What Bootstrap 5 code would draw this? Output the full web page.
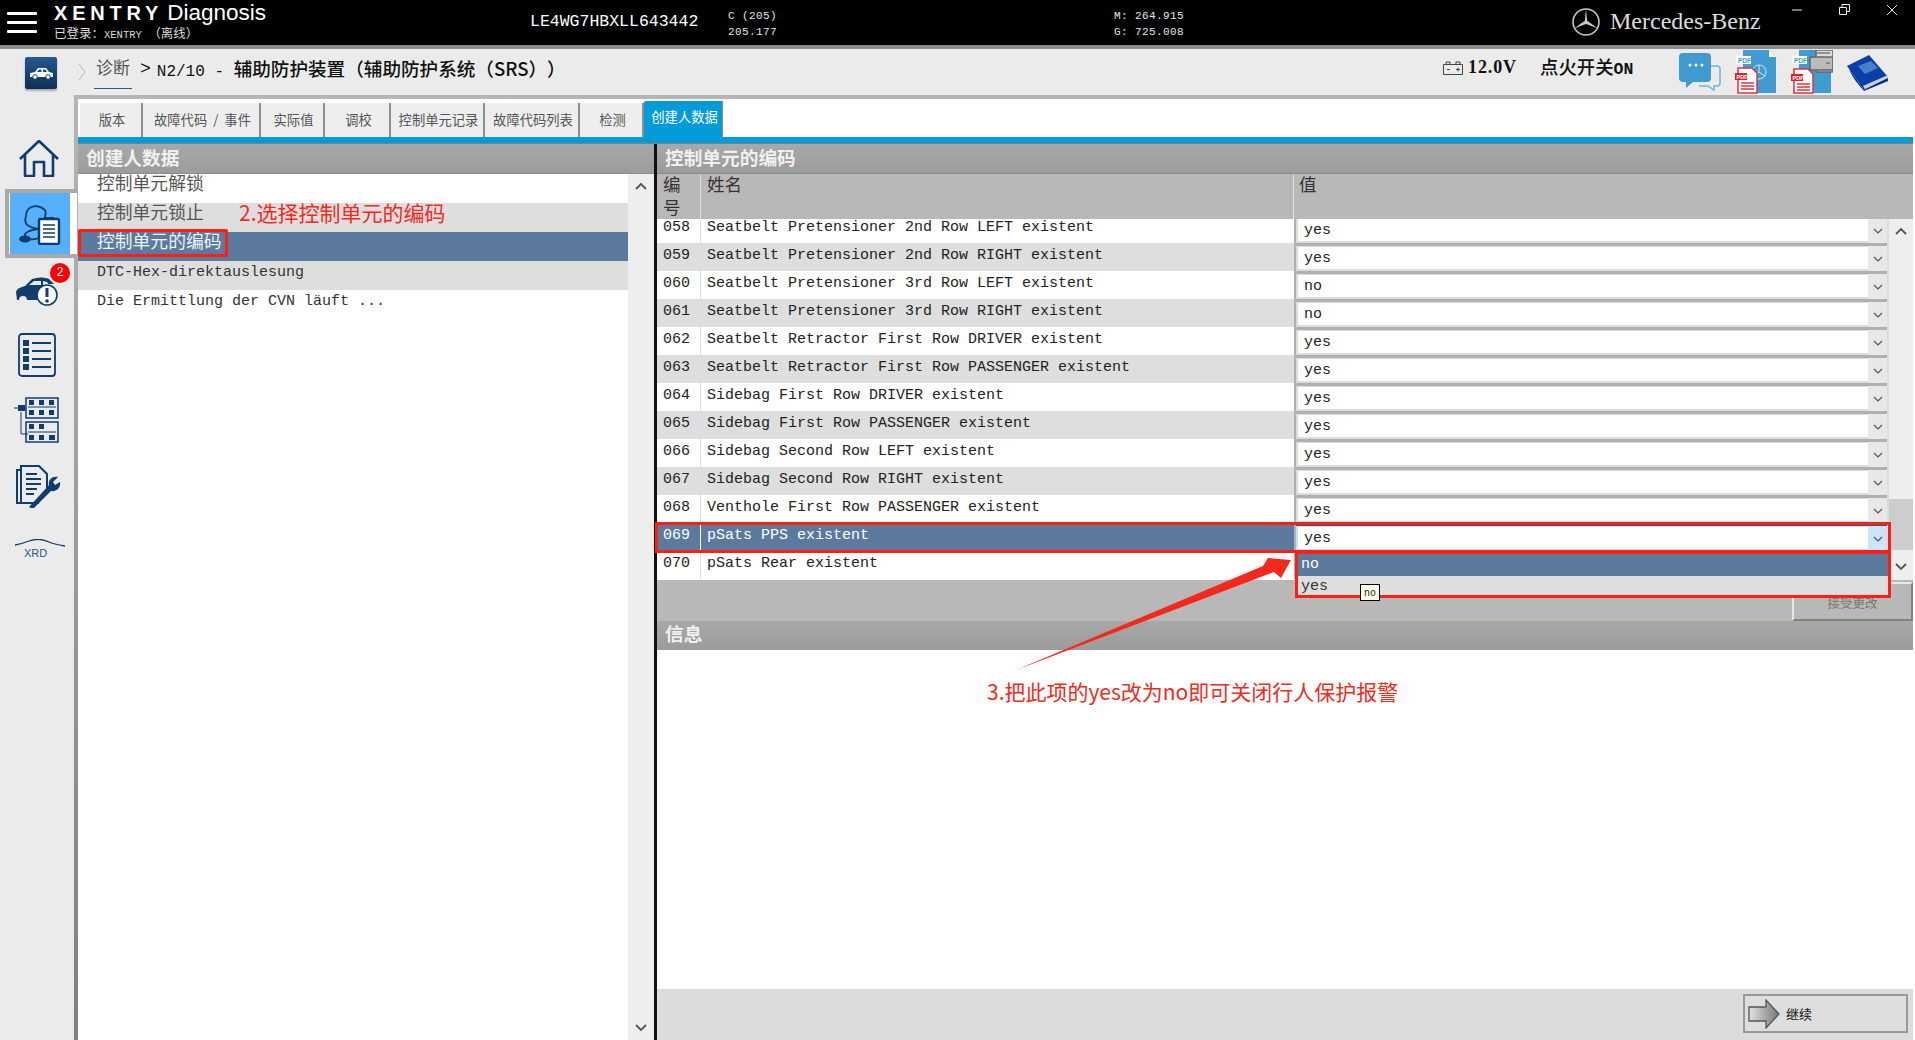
<!DOCTYPE html>
<html lang="zh">
<head>
    <meta charset="UTF-8">
    <title>XENTRY Diagnosis</title>
    <link href="https://cdn.jsdelivr.net/npm/bootstrap@5.3.0/dist/css/bootstrap.min.css" rel="stylesheet">
    <style>
        html, body { height: 100%; overflow: hidden; }
        body { position: relative; width: 1915px; height: 1040px; font-family: "Liberation Mono", "Noto Sans CJK SC", monospace; font-size: 15px; line-height: 1.2; color: #222; background: #ebebeb; text-spacing-trim: space-all; }
        .zh { font-family: "Noto Sans CJK SC", sans-serif; font-size: 1.2em; }

        /* top bar */
        .top-bar { height: 49px; background: #000; border-bottom: 4px solid #8a8a8a; color: #fff; flex: none; }
        .burger { width: 30px; margin: 12px 0 0 7px; flex: none; }
        .burger i { display: block; height: 3px; background: #fff; margin-bottom: 6px; border-radius: 1px; }
        .brand-box { margin-left: 17px; width: 476px; flex: none; }
        .brand-line { height: 26px; line-height: 24px; }
        .brand-x { font: bold 20px "Liberation Sans", sans-serif; letter-spacing: 4.8px; }
        .brand-d { font: 22.5px "Liberation Sans", sans-serif; margin-left: 4px; }
        .brand-sub { font-size: 10.5px; color: #ddd; line-height: 14px; margin-top: 0; }
        .brand-sub .zh { font-size: 12.5px; }
        .vin { font-size: 16.5px; width: 198px; margin-top: 12px; flex: none; }
        .mini-data { font-size: 11px; letter-spacing: .4px; line-height: 16px; padding-top: 8px; color: #e6e6e6; flex: none; }
        .merc { font: 24px "Liberation Serif", serif; color: #ddd; margin-top: 8px; margin-left: 10px; width: 151px; flex: none; }
        .win-btns { width: 154px; padding: 4px 0 0 31px; gap: 36px; flex: none; }

        /* sub bar */
        .sub-bar { height: 46px; background: #ebebeb; flex: none; }
        .car-btn { width: 32px; height: 32px; margin: 8px 0 0 25px; border-radius: 2px; background: linear-gradient(#245b92, #0b2f54); box-shadow: 0 2px 2px #aaa; flex: none; }
        .crumb { margin: 8px 0 0 21px; width: 1280px; font-size: 16px; color: #111; flex: none; }
        .crumb .zh { font-size: 18.6px; font-weight: 500; }
        .crumb-link { color: #555; border-bottom: 1px solid #1b5f95; margin: 0 8px 0 0; padding: 0 2px; height: 32px; font-weight: 400 !important; font-size: 17px !important; }
        .crumb-sep { font-size: 18px; margin: 2px 6px 0 0; }
        .volt { font: bold 18px "Liberation Serif", serif; letter-spacing: .9px; width: 72px; margin: 0 0 0 5px; padding-top: 8px; color: #111; flex: none; }
        .ign { width: 158px; padding-top: 4px; font: bold 16.5px "Liberation Mono", monospace; color: #111; flex: none; }
        .ign .zh { font-size: 18.4px; font-weight: 500; }

        /* side */
        .side-col { width: 74px; background: #ebebeb; flex: none; }
        .side-col svg { display: block; }
        .si-home { margin: 45px 0 0 19px; }
        .si-active { width: 72px; height: 69px; margin: 12px -3px 0 5px; border: 4px solid #a9a9a9; border-right: 0; background: #fff; position: relative; z-index: 2; }
        .si-active > div { width: 60px; height: 61px; margin-left: 1px; background: #57b0fb; }
        .si-car { margin: 19px 0 0 16px; position: relative; width: 42px; }
        .side-badge { position: absolute; left: 34px; top: -14px; width: 20px; height: 20px; border-radius: 50%; background: #f00; color: #fff; font-size: 12px; line-height: 20px; text-align: center; }
        .si-list { margin: 27px 0 0 18px; }
        .si-ecu { margin: 20px 0 0 14px; }
        .si-doc { margin: 22px 0 0 16px; }
        .si-xrd { margin: 31px 0 0 15px; }

        /* frame */
        .work-frame { border-top: 4px solid; border-image: linear-gradient(#b5b5b5, #7f7f7f) 1; border-left: 4px solid #a9a9a9; border-right: 0; border-bottom: 0; width: 1841px; background: #fff; }
        .tab-row { height: 38px; padding-left: 2px; background: #fff; flex: none; }
        .tab-item { height: 34px; padding-left: 3px; background: #eee; border-right: 2px solid #8f8f8f; border-top-left-radius: 2px; color: #555; font-family: "Noto Sans CJK SC", sans-serif; font-size: 13.3px; line-height: 34px; text-align: center; white-space: nowrap; word-spacing: 3px; }
        .tab-on { height: 36px; background: #009bd9; color: #fff; line-height: 32px; border-right: 1px solid #8f8f8f; }
        .tab-strip { height: 7px; width: 1835px; background: #009bd9; border-bottom: 1px solid #808080; flex: none; }
        .panel-left { width: 576px; flex: none; }
        .panel-div { width: 3px; background: #111; flex: none; }
        .panel-right { width: 1256px; flex: none; }
        .panel-head { height: 30px; background: linear-gradient(#a8a8a8, #9c9c9c); border-bottom: 1px solid #858b92; color: #f0f0f0; font-family: "Noto Sans CJK SC", sans-serif; font-size: 18.7px; font-weight: 700; line-height: 26px; padding-left: 8px; flex: none; }
        .side-scroll { width: 26px; background: #eee; flex: none; color: #555; }
        .list-line { height: 29px; padding-left: 19px; color: #333; font-size: 15px; line-height: 23px; }
        .list-line .zh { display: block; font-size: 17.8px; line-height: 17px; color: #555; }
        .list-alt { background: #dedede; }
        .list-sel { background: #5b7a9d; }
        .list-sel .zh { color: #eef2f6; }
        .grid-head { height: 45px; background: #b8b8b8; color: #333; font-family: "Noto Sans CJK SC", sans-serif; font-size: 17.5px; line-height: 23px; flex: none; }
        .head-txt { margin-top: -2px; }
        .c-no { width: 44px; padding-left: 6px; border-right: 1px solid #ddd; flex: none; }
        .c-name { width: 593px; padding-left: 6px; flex: none; }
        .c-val { width: 593px; flex: none; background: #b0b0b0; padding: 3px 0 0 2px; }
        .grid-head .c-name { border-right: 1px solid #ddd; }
        .grid-head .c-val { padding: 0 0 0 5px; width: 619px; background: none; }
        .grid-clip { width: 1230px; height: 361px; overflow: hidden; }
        .grid-inner { margin-top: -4px; }
        .data-line { height: 28px; background: #fff; color: #222; line-height: 26px; }
        .data-line.alt { background: #dedede; }
        .data-line.on { background: #5b7a9d; color: #fff; }
        .data-line.on .c-no { border-color: #fff; }
        .fake-select { height: 25px; background: #fff; color: #222; border: solid #dcdcdc; border-width: 1px 2px 2px; line-height: 24px; padding-left: 6px; }
        .fake-select b { font-weight: 400; flex: 1; }
        .fake-select span { width: 19px; background: #e8e8e8; margin: -1px -2px -2px 0; display: flex; align-items: center; justify-content: center; }
        .on .fake-select { border-color: #c5e0f7; box-shadow: 0 -1px 0 #1b5f95; }
        .on .fake-select span { background: #cce4f7; }
        .grid-scroll { width: 26px; height: 361px; background: #eee; flex: none; border-left: 2px solid #ddd; }
        .grid-scroll .thumb { height: 51px; background: #cdcdcd; }
        .grid-foot { height: 41px; background: #b8b8b8; flex: none; padding-top: 2px; }
        .accept-btn { width: 121px; height: 39px; margin-left: auto; background: #b8b8b8; border: 2px solid; border-color: #e8e8e8 #808080 #808080 #e8e8e8; color: #777; font-family: "Noto Sans CJK SC", sans-serif; font-size: 12.5px; text-align: center; line-height: 38px; }
        .info-body { background: #fff; }
        .bottom-bar { height: 51px; background: #dcdcdc; flex: none; padding: 5px 5px 0 0; }
        .next-btn { width: 165px; height: 39px; border: 2px solid #999; background: #dedede; font-family: "Noto Sans CJK SC", sans-serif; font-size: 13px; color: #111; margin-left: auto; gap: 6px; padding-left: 3px; padding-top: 1px; }

        /* dropdown + notes lying over the grid */
        .drop-list { position: absolute; left: 1297px; top: 554px; width: 592px; z-index: 5; font-size: 15px; }
        .drop-list div { height: 21.5px; padding-left: 4px; line-height: 22px; }
        .drop-a { background: #5b7a9d; color: #fff; }
        .drop-b { background: #dedede; color: #333; }
        .tip-no { position: absolute; left: 1360px; top: 584px; width: 20px; height: 17px; z-index: 7; background: #ffffe1; border: 1px solid #000; font-size: 10px; line-height: 17px; text-align: center; color: #222; }
        .mark-box { position: absolute; border: 3px solid #fb1f14; z-index: 6; }
        .mark-a { left: 78px; top: 229px; width: 150px; height: 28px; border-radius: 2px; }
        .mark-b { left: 655px; top: 522px; width: 1236px; height: 31px; }
        .mark-c { left: 1295px; top: 551px; width: 596px; height: 47px; }
        .note-red { position: absolute; z-index: 6; color: #f4291b; font-family: "Noto Sans CJK SC", sans-serif; font-size: 21px; line-height: 28px; white-space: nowrap; }
        .note-2 { left: 239px; top: 198px; }
        .note-3 { left: 987px; top: 677px; }
        .arrow-mark { position: absolute; left: 1010px; top: 555px; z-index: 6; }
    </style>
</head>
<body class="d-flex flex-column">
    <!-- верх -->
    <div class="top-bar d-flex">
        <div class="burger"><i></i><i></i><i></i></div>
        <div class="brand-box">
            <div class="brand-line"><span class="brand-x">XENTRY</span><span class="brand-d">Diagnosis</span></div>
            <div class="brand-sub"><span class="zh">已登录：</span>XENTRY <span class="zh">（离线）</span></div>
        </div>
        <div class="vin">LE4WG7HBXLL643442</div>
        <div class="mini-data" style="width:386px">C (205)<br>205.177</div>
        <div class="mini-data" style="width:458px">M: 264.915<br>G: 725.008</div>
        <svg width="28" height="28" viewBox="0 0 28 28" class="mt-2 flex-shrink-0">
            <circle cx="14" cy="14" r="13" fill="none" stroke="#c8c8c8" stroke-width="1.6"/>
            <path d="M14 1 L15.2 12.8 L26 20.5 L14 16 L2 20.5 L12.8 12.8 Z" fill="#c8c8c8"/>
        </svg>
        <div class="merc">Mercedes-Benz</div>
        <div class="win-btns d-flex">
            <svg width="11" height="11" viewBox="0 0 11 11"><path d="M0 6h10" stroke="#eee"/></svg>
            <svg width="11" height="11" viewBox="0 0 11 11" fill="none" stroke="#eee"><path d="M.5 3.5h7v7h-7zM3 3V.5h7.5v7H8"/></svg>
            <svg width="12" height="12" viewBox="0 0 12 12"><path d="M1 1l10 10M11 1L1 11" stroke="#eee"/></svg>
        </div>
    </div>

    <div class="sub-bar d-flex">
        <div class="car-btn d-flex align-items-center justify-content-center">
            <svg width="25" height="13" viewBox="0 0 25 13">
                <path d="M1 6L6 5L9 1H17L20 5L24 6V10H1Z" fill="#fff"/>
                <path d="M8 5L10 2.500H12.500V5ZM14 5V2.500H16.500L18 5Z" fill="#1b4d80"/>
                <circle cx="6" cy="10" r="2.300" fill="#fff" stroke="#123e6b"/><circle cx="19" cy="10" r="2.300" fill="#fff" stroke="#123e6b"/>
            </svg>
        </div>
        <div class="crumb d-flex">
            <svg width="8" height="18" viewBox="0 0 8 18" class="me-2" style="margin-top:6px"><path d="M1 1l6 8-6 8" fill="none" stroke="#bbb"/></svg>
            <span class="zh crumb-link">诊断</span>
            <span class="crumb-sep">&gt;</span>
            <span>N2/10 - <span class="zh">辅助防护装置（辅助防护系统（SRS））</span></span>
        </div>
        <svg width="20" height="14" viewBox="0 0 20 14" fill="none" stroke="#444" class="flex-shrink-0" style="margin:12px 0 0 85px"><path d="M.5 3.500h19v10H.5zM3 3.500V1h4v2.500M13 3.500V1h4v2.500M4 8.500h3M13 8.500h4M15 6.500v4"/></svg>
        <div class="volt">12.0V</div>
        <div class="ign"><span class="zh">点火开关</span>ON</div>
    </div>

    <!-- иконки справа в строке -->
    <div class="position-absolute d-flex" style="left:1679px;top:50px;z-index:3;gap:14px">
        <svg width="42" height="40" viewBox="0 0 42 40" style="margin-top:3px">
            <path d="M21 13h17a3 3 0 0 1 3 3v14a3 3 0 0 1-3 3h-3v4l-6-4H20" fill="none" stroke="#6fb4dc" stroke-width="1.500"/>
            <path d="M4 0h24a4 4 0 0 1 4 4v21a4 4 0 0 1-4 4H14l-7 6v-6H4a4 4 0 0 1-4-4V4a4 4 0 0 1 4-4z" fill="#3f9bd0"/>
            <circle cx="11" cy="12" r="1.500" fill="#fff"/><circle cx="17" cy="12" r="1.500" fill="#fff"/><circle cx="23" cy="12" r="1.500" fill="#fff"/>
        </svg>
        <svg width="42" height="44" viewBox="0 0 42 44">
            <path d="M8 0h26l7 7v36H8z" fill="#3f9bd0"/><path d="M34 0l7 7h-7z" fill="#fff"/>
            <rect x="1" y="6" width="15" height="8" fill="#fff"/><text x="3" y="13" font-family="Liberation Sans" font-size="6.500" font-weight="700" fill="#3f9bd0">PDF</text>
            <circle cx="24" cy="22" r="7" fill="none" stroke="#d7e8f3"/><path d="M24 15v7l6 4M24 22l-6 4" stroke="#d7e8f3" fill="none"/>
            <path d="M3 18h14l5 5v20H3z" fill="#fff" stroke="#e0323c" stroke-width="1.500"/>
            <rect x="0" y="23" width="12" height="7" fill="#d9232e"/><text x="1.500" y="29" font-family="Liberation Sans" font-size="5.500" font-weight="700" fill="#fff">PDF</text>
            <path d="M6 33h13M6 36h13M6 39h13" stroke="#e0323c" stroke-width="1.400"/>
        </svg>
        <svg width="42" height="44" viewBox="0 0 42 44">
            <path d="M8 0h32v43H8z" fill="#3f9bd0"/>
            <rect x="1" y="6" width="15" height="8" fill="#fff"/><text x="3" y="13" font-family="Liberation Sans" font-size="6.500" font-weight="700" fill="#3f9bd0">PDF</text>
            <path d="M3 19h14l5 5v19H3z" fill="#fff" stroke="#e0323c" stroke-width="1.500"/>
            <rect x="0" y="24" width="12" height="7" fill="#d9232e"/><text x="1.500" y="30" font-family="Liberation Sans" font-size="5.500" font-weight="700" fill="#fff">PDF</text>
            <path d="M6 34h13M6 37h13M6 40h13" stroke="#e0323c" stroke-width="1.400"/>
            <rect x="25" y="0" width="17" height="22" fill="#ddd" stroke="#666" stroke-width="1.500" rx="1"/>
            <rect x="19" y="7" width="23" height="13" fill="#bbb" stroke="#666" stroke-width="1.500" rx="2"/><path d="M26 3h13M35 13h4" stroke="#777" stroke-width="1.500"/>
        </svg>
        <svg width="42" height="36" viewBox="0 0 42 36" style="margin-top:5px">
            <path d="M0 11L22 0l19 22-24 13z" fill="#0b3fa8"/><path d="M2 14l15 21 24-13v4L17 36C12 30 6 24 2 14z" fill="#092f7d"/>
            <path d="M16 31l25-11v3L18 34z" fill="#cfcfcf"/><path d="M11 11l13-5 7 7-13 6z" fill="#4d7fc8"/>
        </svg>
    </div>

    <div class="d-flex flex-grow-1" style="min-height:0">
        <div class="side-col">
            <svg class="si-home" width="40" height="37" viewBox="0 0 40 37" fill="none" stroke="#0f3d6e" stroke-width="2.600" stroke-linejoin="round">
                <path d="M1 19L20 1l19 18M6 15v21h9V22h10v14h9V15"/>
            </svg>
            <div class="si-active"><div class="d-flex align-items-center justify-content-center">
                <svg width="42" height="42" viewBox="0 0 42 42" fill="none" stroke="#0f3d6e" stroke-width="1.800">
                    <path d="M7 13C7 3 18 0 26 7C27 9 27 11 26 14"/>
                    <path d="M7 13C4 22 10 24 19 26C10 27 5 30 6 33C8 37 14 37 20 35"/>
                    <ellipse cx="6" cy="36" rx="6" ry="3.500" fill="#0f3d6e" stroke="none"/>
                    <rect x="20" y="16" width="20" height="25" rx="1.500" fill="#fff" stroke-width="2.400"/>
                    <path d="M25 14h10v3H25z" fill="#0f3d6e" stroke="none"/>
                    <path d="M24 22h12M24 26h12M24 30h12M24 34h12" stroke-width="1.700"/>
                </svg>
            </div></div>
            <div class="si-car">
                <svg width="42" height="29" viewBox="0 0 42 29">
                    <path d="M0 15c1-4 6-5 9-6l7-7c6-2 12-2 17 0l5 5h-8c-7 2-8 10-7 16H11a4 4 0 0 0-8 0H1z" fill="#0f3d6e"/>
                    <path d="M13 8l5-4h7v4zM27 8V4l4 1 2 3z" fill="#ebebeb"/>
                    <circle cx="31" cy="18" r="10" fill="#fff" stroke="#0f3d6e" stroke-width="1.600"/>
                    <path d="M31 11v9" stroke="#0f3d6e" stroke-width="3"/><circle cx="31" cy="24" r="1.800" fill="#0f3d6e"/>
                </svg>
                <span class="side-badge">2</span>
            </div>
            <svg class="si-list" width="38" height="44" viewBox="0 0 38 44" fill="none" stroke="#0f3d6e">
                <rect x="1" y="1" width="36" height="42" rx="3" stroke-width="1.800"/>
                <path d="M14 10h19M14 18h19M14 26h19M14 34h19" stroke-width="2"/>
                <path d="M5 7h6v6H5zM5 15h6v6H5zM5 23h6v6H5zM5 31h6v6H5z" fill="#0f3d6e" stroke="none"/>
            </svg>
            <svg class="si-ecu" width="45" height="46" viewBox="0 0 45 46" fill="none" stroke="#0f3d6e">
                <rect x="12" y="1" width="32" height="20" stroke-width="1.500"/><rect x="12" y="25" width="32" height="20" stroke-width="1.500"/>
                <path d="M0 11h4M10 11h2M7 15v22h7" stroke-width="1"/><rect x="4" y="8" width="7" height="6" fill="#0f3d6e" stroke="none"/>
                <path d="M15 3h5v5h-5zM25 3h5v5h-5zM35 3h5v5h-5zM15 13h5v5h-5zM25 13h5v5h-5zM35 13h5v5h-5zM15 27h5v5h-5zM25 27h5v5h-5zM15 38h5v5h-5zM25 38h5v5h-5zM35 38h6v5h-6z" fill="#0f3d6e" stroke="none"/>
                <path d="M14 10h28M14 35h28" stroke-width="1"/>
            </svg>
            <svg class="si-doc" width="46" height="43" viewBox="0 0 46 43" fill="none" stroke="#0f3d6e" stroke-width="2">
                <path d="M4 5H1v33h22"/><path d="M5 1h18l8 8v19l-11 10H5z" fill="#ebebeb"/>
                <path d="M10 9h11M10 14h15M10 19h15M10 24h11M10 29h8"/>
                <path d="M13 42l20-22c-1-5 3-9 9-8l-5 5 2 3 5-3c1 6-4 10-9 9L17 44z" fill="#0f3d6e" stroke="none"/>
            </svg>
            <svg class="si-xrd" width="50" height="30" viewBox="0 0 50 30">
                <path d="M0 6c5-1 9-2 14-4 6-2 14-2 20 1 4 2 10 3 16 4" fill="none" stroke="#0f3d6e" stroke-width="1.300"/>
                <text x="9" y="18" font-family="Liberation Sans" font-size="11" fill="#28568a">XRD</text>
            </svg>
        </div>

        <div class="work-frame d-flex flex-column">
            <div class="tab-row d-flex align-items-end" id="tabRow"></div>
            <div class="tab-strip"></div>
            <div class="d-flex flex-grow-1" style="min-height:0">
                <div class="panel-left d-flex flex-column">
                    <div class="panel-head">创建人数据</div>
                    <div class="d-flex flex-grow-1">
                        <div class="flex-grow-1">
                            <div class="list-line"><span class="zh">控制单元解锁</span></div>
                            <div class="list-line list-alt"><span class="zh">控制单元锁止</span></div>
                            <div class="list-line list-sel"><span class="zh">控制单元的编码</span></div>
                            <div class="list-line list-alt">DTC-Hex-direktauslesung</div>
                            <div class="list-line">Die Ermittlung der CVN läuft ...</div>
                        </div>
                        <div class="side-scroll d-flex flex-column align-items-center justify-content-between pt-2 pb-2">
                            <svg width="12" height="8" viewBox="0 0 12 8"><path d="M1 7l5-5 5 5" fill="none" stroke="#555" stroke-width="1.800"/></svg>
                            <svg width="12" height="8" viewBox="0 0 12 8"><path d="M1 1l5 5 5-5" fill="none" stroke="#555" stroke-width="1.800"/></svg>
                        </div>
                    </div>
                </div>
                <div class="panel-div"></div>
                <div class="panel-right d-flex flex-column">
                    <div class="panel-head">控制单元的编码</div>
                    <div class="grid-head d-flex">
                        <div class="c-no"><div class="head-txt">编<br>号</div></div>
                        <div class="c-name"><div class="head-txt">姓名</div></div>
                        <div class="c-val"><div class="head-txt">值</div></div>
                    </div>
                    <div class="d-flex flex-shrink-0">
                        <div class="grid-clip"><div class="grid-inner" id="gridRows"></div></div>
                        <div class="grid-scroll d-flex flex-column">
                            <div class="pt-2" style="height:280px"><svg width="12" height="8" viewBox="0 0 12 8" class="d-block mx-auto"><path d="M1 7l5-5 5 5" fill="none" stroke="#555" stroke-width="1.800"/></svg></div>
                            <div class="thumb"></div>
                            <div style="padding-top:13px"><svg width="12" height="8" viewBox="0 0 12 8" class="d-block mx-auto"><path d="M1 1l5 5 5-5" fill="none" stroke="#555" stroke-width="1.800"/></svg></div>
                        </div>
                    </div>
                    <div class="grid-foot d-flex"><div class="accept-btn">接受更改</div></div>
                    <div class="panel-head" style="border-bottom:0;height:29px;line-height:24px">信息</div>
                    <div class="info-body flex-grow-1"></div>
                    <div class="bottom-bar d-flex">
                        <div class="next-btn d-flex align-items-center">
                            <svg width="32" height="30" viewBox="0 0 32 30"><defs><linearGradient id="arrowFill"><stop offset="0" stop-color="#dfe2e5"/><stop offset="1" stop-color="#777"/></linearGradient></defs><path d="M1 8h17V1l13 14-13 14v-7H1z" fill="url(#arrowFill)" stroke="#555" stroke-width="1.300"/></svg>
                            <span>继续</span>
                        </div>
                    </div>
                </div>
            </div>
        </div>
    </div>

    <!-- выпадающий список и пометки -->
    <div class="drop-list"><div class="drop-a">no</div><div class="drop-b">yes</div></div>
    <div class="tip-no">no</div>
    <div class="mark-box mark-a"></div>
    <div class="mark-box mark-b"></div>
    <div class="mark-box mark-c"></div>
    <div class="note-red note-2">2.选择控制单元的编码</div>
    <div class="note-red note-3">3.把此项的yes改为no即可关闭行人保护报警</div>
    <svg class="arrow-mark" width="290" height="120" viewBox="1010 555 290 120">
        <path d="M1016 670L1263 566L1268 558L1291 560L1281 578L1274 572Z" fill="#f4291b"/>
    </svg>

    <script src="https://cdn.jsdelivr.net/npm/bootstrap@5.3.0/dist/js/bootstrap.bundle.min.js"></script>
    <script>
        // Вкладки
        const tabs = [['版本', 63], ['故障代码 / 事件', 118], ['实际值', 64], ['调校', 66], ['控制单元记录', 94], ['故障代码列表', 95], ['检测', 64], ['创建人数据', 79]];
        document.getElementById('tabRow').innerHTML = tabs.map((t, i) =>
            `<div class="tab-item ${i === 7 ? 'tab-on' : ''}" style="width:${t[1]}px">${t[0]}</div>`).join('');

        // Строки таблицы
        const rows = [
            ['058', 'Seatbelt Pretensioner 2nd Row LEFT existent', 'yes'],
            ['059', 'Seatbelt Pretensioner 2nd Row RIGHT existent', 'yes'],
            ['060', 'Seatbelt Pretensioner 3rd Row LEFT existent', 'no'],
            ['061', 'Seatbelt Pretensioner 3rd Row RIGHT existent', 'no'],
            ['062', 'Seatbelt Retractor First Row DRIVER existent', 'yes'],
            ['063', 'Seatbelt Retractor First Row PASSENGER existent', 'yes'],
            ['064', 'Sidebag First Row DRIVER existent', 'yes'],
            ['065', 'Sidebag First Row PASSENGER existent', 'yes'],
            ['066', 'Sidebag Second Row LEFT existent', 'yes'],
            ['067', 'Sidebag Second Row RIGHT existent', 'yes'],
            ['068', 'Venthole First Row PASSENGER existent', 'yes'],
            ['069', 'pSats PPS existent', 'yes'],
            ['070', 'pSats Rear existent', '']
        ];
        document.getElementById('gridRows').innerHTML = rows.map((r, i) => {
            const cls = i === 11 ? 'on' : (i % 2 ? 'alt' : '');
            const sel = r[2] ? `<div class="fake-select d-flex"><b>${r[2]}</b><span><svg width="10" height="6" viewBox="0 0 10 6"><path d="M1 1l4 4 4-4" fill="none" stroke="#555" stroke-width="1.200"/></svg></span></div>` : '';
            return `<div class="data-line d-flex ${cls}"><div class="c-no">${r[0]}</div><div class="c-name">${r[1]}</div><div class="c-val">${sel}</div></div>`;
        }).join('');
    </script>
</body>
</html>
